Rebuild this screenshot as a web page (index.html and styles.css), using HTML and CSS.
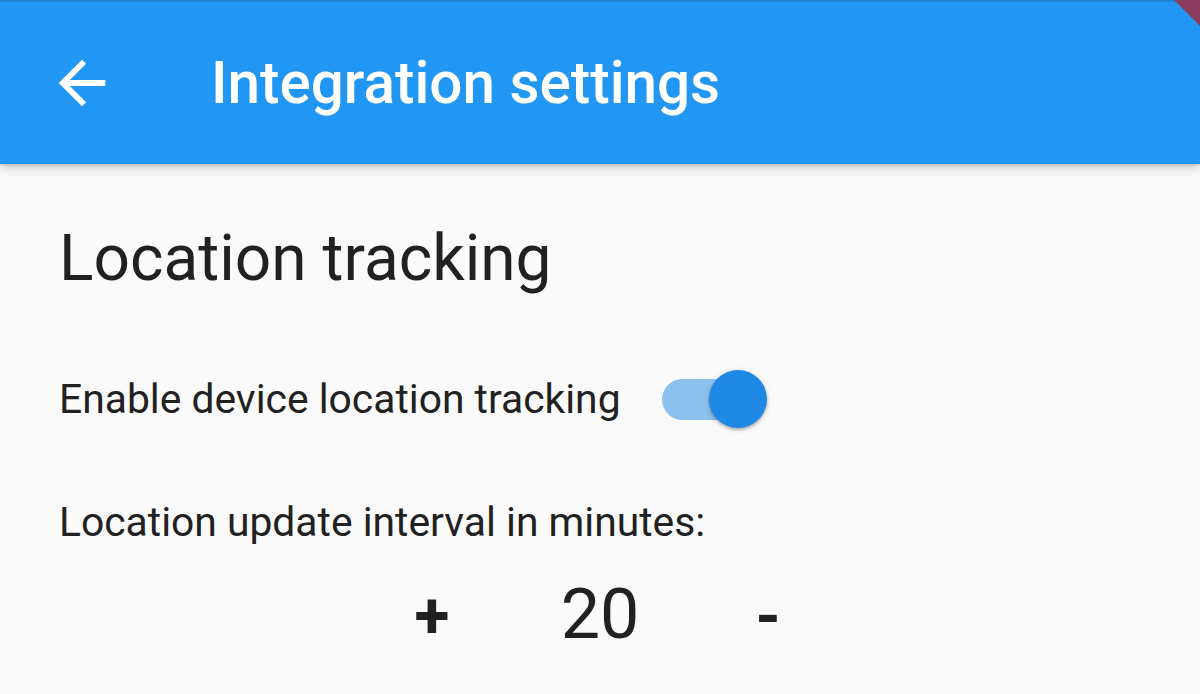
FILE: index.html
```html
<!DOCTYPE html>
<html lang="en">
<head>
<meta charset="utf-8">
<title>Integration settings</title>
<link rel="stylesheet" href="styles.css">
</head>
<body>
<header class="appbar">
  <button class="back" aria-label="Back">
    <svg viewBox="0 0 24 24" width="70" height="70"><path fill="#fff" d="M20 11H7.83l5.59-5.59L12 4l-8 8 8 8 1.41-1.41L7.83 13H20v-2z"/></svg>
  </button>
  <h1 class="title">Integration settings</h1>
  <div class="debug-banner"></div>
</header>
<main class="content">
  <h2 class="headline">Location tracking</h2>
  <div class="switch-row">
    <span class="label">Enable device location tracking</span>
    <div class="switch" role="switch" aria-checked="true">
      <span class="track"></span>
      <span class="thumb"></span>
    </div>
  </div>
  <p class="label interval">Location update interval in minutes:</p>
  <div class="stepper">
    <button class="step">+</button>
    <span class="value">20</span>
    <button class="step">-</button>
  </div>
</main>
</body>
</html>
```
FILE: styles.css
```css
html, body {
  margin: 0;
  padding: 0;
}
body {
  width: 1200px;
  height: 694px;
  overflow: hidden;
  background: #fafafa;
  font-family: Roboto, "Liberation Sans", sans-serif;
  color: #212121;
}
.appbar {
  position: relative;
  height: 162px;
  border-top: 2px solid #1c80d4;
  background: #2196f3;
  display: flex;
  align-items: center;
  padding-left: 47px;
  box-shadow: 0 4px 10px rgba(0, 0, 0, 0.18), 0 1px 3px rgba(0, 0, 0, 0.12);
  z-index: 1;
}
.back {
  width: 70px;
  height: 70px;
  padding: 0;
  border: 0;
  background: none;
  display: flex;
}
.title {
  margin: 0 0 0 94px;
  font-size: 58.4px;
  font-weight: 500;
  line-height: 70px;
  color: #fff;
  letter-spacing: 0;
}
.debug-banner {
  position: absolute;
  top: -2px;
  right: 0;
  width: 26px;
  height: 26px;
  background: #8a3a5a;
  clip-path: polygon(0 0, 100% 0, 100% 100%);
  filter: blur(0.6px);
}
.content {
  padding-left: 59px;
}
.headline {
  margin: 55px 0 0;
  font-size: 64px;
  font-weight: 400;
  line-height: 80px;
}
.switch-row {
  margin-top: 70px;
  height: 60px;
  display: flex;
  align-items: center;
  gap: 41px;
}
.label {
  font-size: 40.8px;
  line-height: 48px;
  letter-spacing: 0;
}
.switch {
  position: relative;
  width: 105px;
  height: 60px;
  display: flex;
  align-items: center;
}
.track {
  width: 97px;
  height: 41px;
  border-radius: 21px;
  background: #8cc1ef;
}
.thumb {
  position: absolute;
  left: 47px;
  top: 1px;
  width: 58px;
  height: 58px;
  border-radius: 50%;
  background: #1e88e5;
  box-shadow: 0 2px 3px rgba(0, 0, 0, 0.25), 0 1px 6px rgba(0, 0, 0, 0.12);
}
.interval {
  margin: 69px 0 0;
}
.stepper {
  margin: 28px 0 0 -59px;
  display: grid;
  grid-template-columns: repeat(3, 168px);
  justify-content: center;
  align-items: baseline;
  font-size: 70px;
  line-height: 80px;
}
.step {
  padding: 0;
  border: 0;
  background: none;
  font-family: inherit;
  font-size: 64px;
  font-weight: 700;
  line-height: 80px;
  color: #212121;
}
.value {
  text-align: center;
}
```
